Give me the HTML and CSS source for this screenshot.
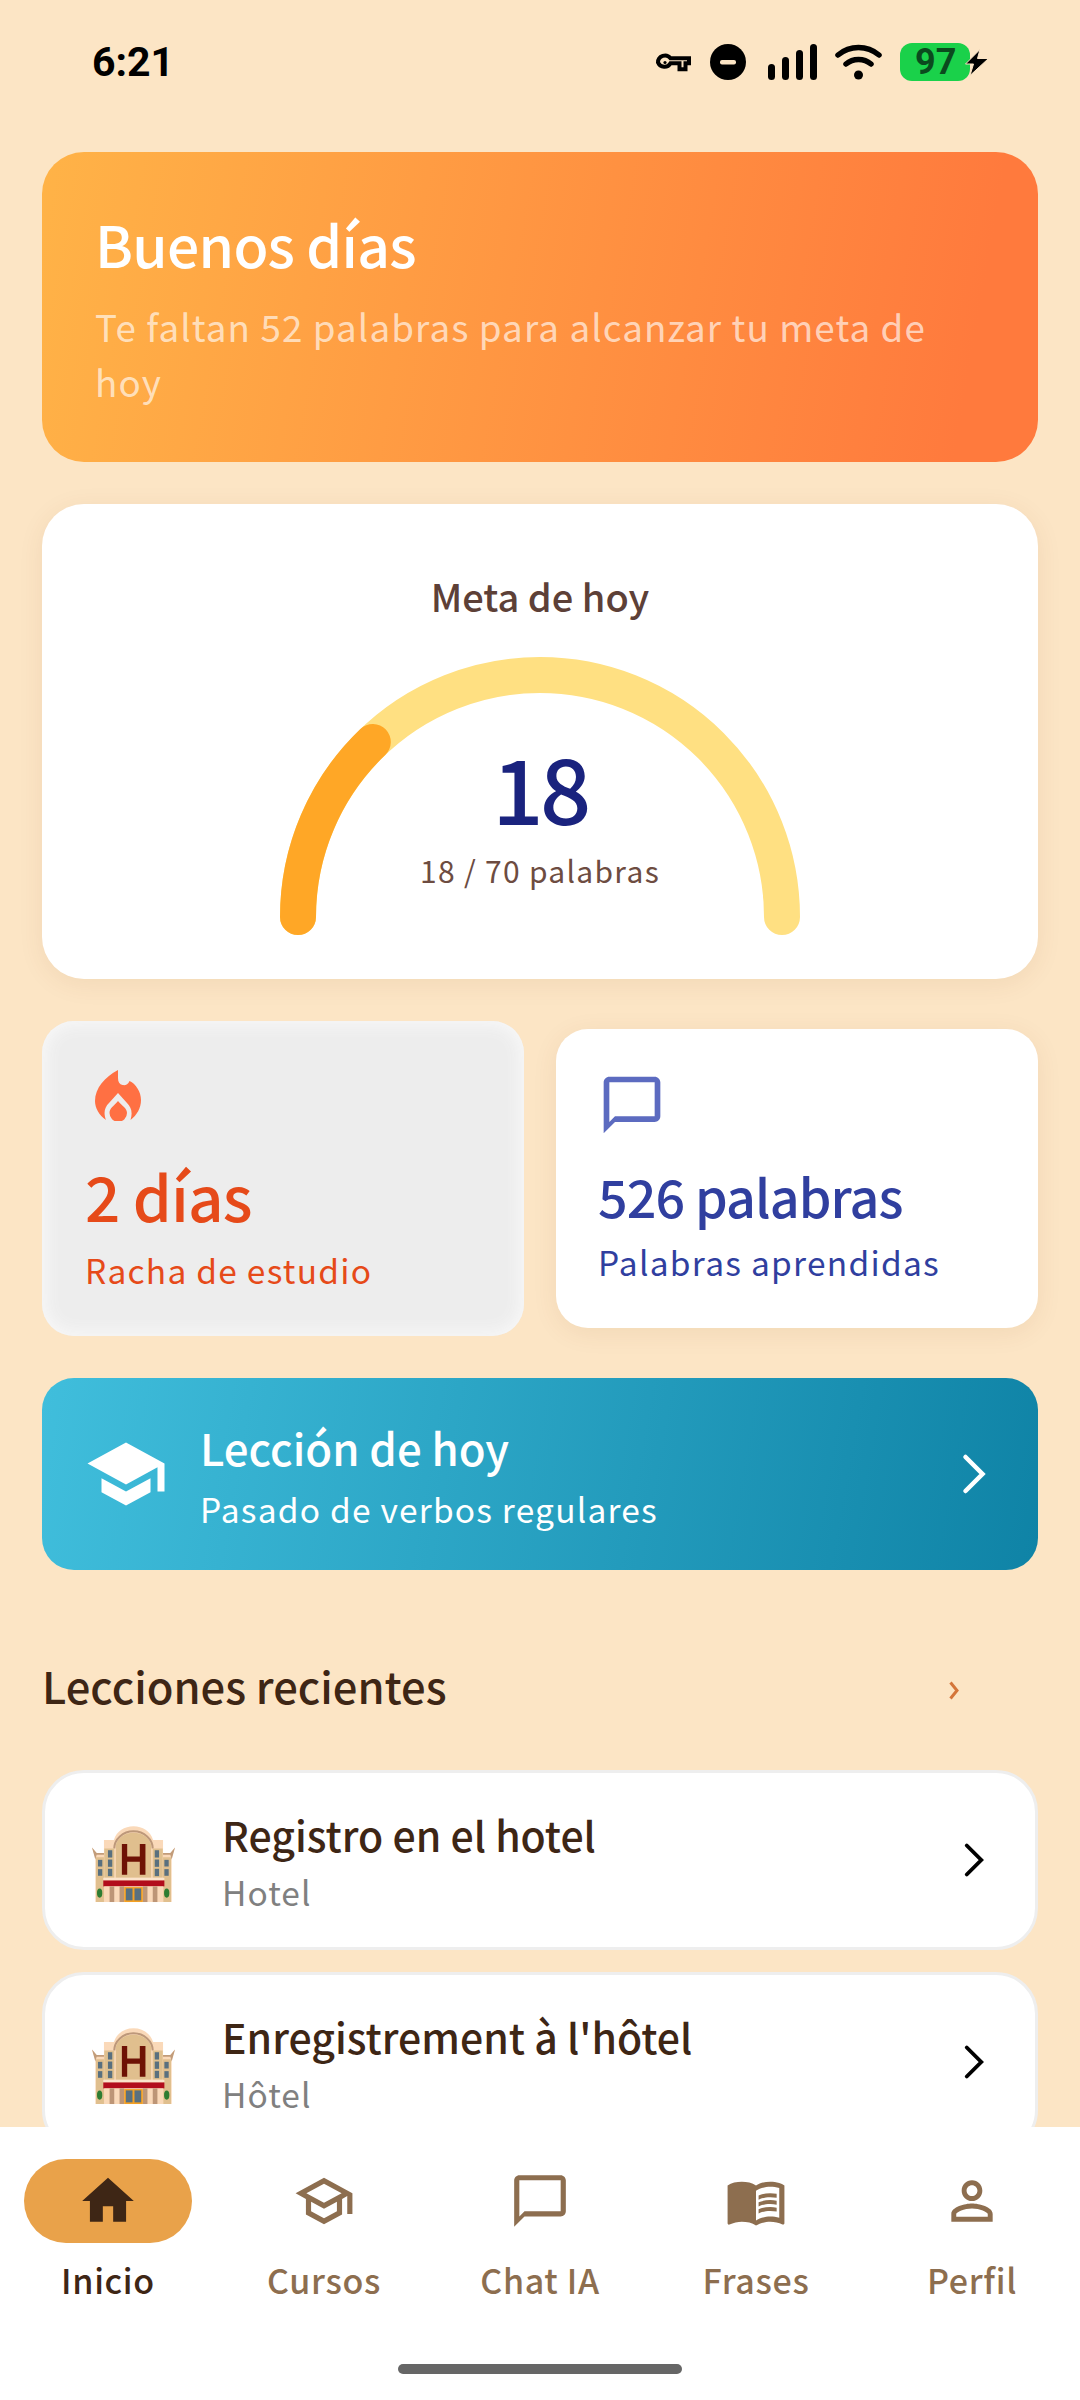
FILE: index.html
```html
<!DOCTYPE html>
<html lang="es">
<head>
<meta charset="utf-8">
<title>Inicio</title>
<link rel="stylesheet" href="styles.css">
</head>
<body>
<svg class="defs" width="0" height="0" aria-hidden="true">
  <symbol id="hotel" viewBox="185 195 250 233">
    <path fill="#FAD9B9" d="M185 259l14 16h22v-39h30c8-26 32-41 59-41s51 15 59 41h30v39h22l14-16-10 30v134H195V289z"/>
    <path fill="#C29C7A" d="M185 259l14 16h22v6h-22l-4 14zM435 259l-14 16h-22v6h22l4 14z"/>
    <path fill="#E0BF8E" d="M197 288h24v135h-24zM399 288h24v135h-24z"/>
    <path fill="#E0BF8E" d="M257 350v-100c6-22 29-36 53-36s47 14 53 36v100z"/>
    <path fill="none" stroke="#BD987A" stroke-width="6" d="M252 262c0-28 26-52 58-52s58 24 58 52"/>
    <path fill="#DFC08F" d="M222 262h30v88h-30zM368 262h30v88h-30z"/>
    <path fill="#6E1205" d="M275 248h16v38h38v-38h17v93h-17v-39h-38v39h-16z"/>
    <g fill="#59707F">
      <rect x="233" y="267" width="13" height="22"/><rect x="233" y="295" width="13" height="22"/><rect x="233" y="323" width="13" height="22"/>
      <rect x="374" y="267" width="13" height="22"/><rect x="374" y="295" width="13" height="22"/><rect x="374" y="323" width="13" height="22"/>
      <rect x="203" y="296" width="13" height="20"/><rect x="203" y="324" width="13" height="20"/>
      <rect x="403" y="296" width="13" height="20"/><rect x="403" y="324" width="13" height="20"/>
    </g>
    <rect x="219" y="350" width="184" height="8" fill="#FBE3CB"/>
    <rect x="219" y="358" width="184" height="18" fill="#B20D1C"/>
    <rect x="222" y="376" width="178" height="47" fill="#FAD9B9"/>
    <g fill="#BD9576"><rect x="238" y="376" width="14" height="47"/><rect x="268" y="376" width="14" height="47"/><rect x="338" y="376" width="14" height="47"/><rect x="368" y="376" width="14" height="47"/></g>
    <rect x="282" y="378" width="56" height="45" fill="#F4A023"/>
    <rect x="287" y="382" width="20" height="36" fill="#59707F"/><rect x="313" y="382" width="20" height="36" fill="#59707F"/>
    <ellipse cx="208" cy="396" rx="8" ry="14" fill="#2E7D32"/><ellipse cx="410" cy="396" rx="8" ry="14" fill="#2E7D32"/>
  </symbol>
  <symbol id="chev" viewBox="0 0 24 24"><path fill="none" stroke="currentColor" stroke-width="1.600" stroke-linecap="round" stroke-linejoin="miter" d="M9 6l6 6-6 6"/></symbol>
</svg>

<div class="app">
  <main class="scroll">
    <div class="status">
      <span class="clock">6:21</span>
      <div class="status-icons">
        <svg class="i-key" viewBox="0 0 35 19"><path fill="none" stroke="#000" stroke-width="4" d="M2 9.500a7 7 0 0 1 12.500-4.300H33v5h-3.500v6h-6v-6h-9A7 7 0 0 1 2 9.500z"/><circle cx="9" cy="9.500" r="1.600" fill="#000"/></svg>
        <svg class="i-dnd" viewBox="0 0 36 36"><circle cx="18" cy="18" r="18" fill="#000"/><rect x="10" y="16" width="16" height="4.500" rx="2" fill="#FDE6C6"/></svg>
        <svg class="i-sig" viewBox="0 0 49 36"><rect x="0" y="20" width="7" height="16" rx="3.500"/><rect x="14" y="13" width="7" height="23" rx="3.500"/><rect x="28" y="6" width="7" height="30" rx="3.500"/><rect x="42" y="0" width="7" height="36" rx="3.500"/></svg>
        <svg class="i-wifi" viewBox="0 0 47 36"><path fill="none" stroke="#000" stroke-width="5.500" stroke-linecap="round" d="M3 11c12-10 29-10 41 0M11 20c7-6 18-6 25 0"/><circle cx="23.500" cy="31" r="4.500"/></svg>
        <div class="battery"><span class="batt-pct">97</span></div>
        <svg class="i-bolt" viewBox="0 0 24 27"><path fill="#000" stroke="#FDE6C6" stroke-width="1" d="M15 .5L.5 15h8l-3.500 11.500L23.500 9.500H12.500L15 .5z"/></svg>
      </div>
    </div>

    <section class="hero">
      <h1 class="hero-title">Buenos días</h1>
      <p class="hero-sub">Te faltan 52 palabras para alcanzar tu meta de hoy</p>
    </section>

    <section class="goal">
      <h2 class="goal-title">Meta de hoy</h2>
      <div class="gauge">
        <svg class="gauge-arc" viewBox="0 0 520 278">
          <path class="track" d="M18 260A242 242 0 0 1 502 260"/>
          <path class="fill" d="M18 260A242 242 0 0 1 92.800 85"/>
        </svg>
        <div class="gauge-text">
          <span class="gauge-num">18</span>
          <span class="gauge-sub">18 / 70 palabras</span>
        </div>
      </div>
    </section>

    <section class="stats">
      <article class="stat stat-streak">
        <svg class="stat-flame" viewBox="0 0 46 51"><path fill="#FF7043" d="M23 0C10 7 0 18 0 31c0 7 4 14 11 19-3-8-1-13 3-17l9-10 9 10c4 4 6 9 3.500 17C42 45 46 38 46 30c0-8-5-16-11.500-19-1.500 4-4.500 4.500-7 4-3-.5-4.500-3-4.500-7zM23 31c-4 5-8.500 7-8.500 12a8.700 8.700 0 0 0 17.500 0c0-5-5-7-9-12z"/></svg>
        <strong class="stat-num">2 días</strong>
        <span class="stat-label">Racha de estudio</span>
      </article>
      <article class="stat stat-words">
        <svg class="stat-chat" viewBox="0 0 24 24"><path d="M20 2H4c-1.100 0-2 .9-2 2v18l4-4h14c1.100 0 2-.9 2-2V4c0-1.100-.9-2-2-2zm0 14H6l-2 2V4h16v12z"/></svg>
        <strong class="stat-num">526 palabras</strong>
        <span class="stat-label">Palabras aprendidas</span>
      </article>
    </section>

    <section class="lesson">
      <svg class="lesson-icon" viewBox="0 0 24 24"><path d="M5 13.180v4L12 21l7-3.820v-4L12 17l-7-3.820zM12 3L1 9l11 6 9-4.910V17h2V9L12 3z"/></svg>
      <div class="lesson-text">
        <span class="lesson-title">Lección de hoy</span>
        <span class="lesson-sub">Pasado de verbos regulares</span>
      </div>
      <svg class="lesson-chev"><use href="#chev"/></svg>
    </section>

    <div class="section-head">
      <h2 class="section-title">Lecciones recientes</h2>
      <svg class="section-more" viewBox="0 0 10 19"><path fill="none" stroke="currentColor" stroke-width="3" d="M1.500 1.500l6.500 8-6.500 8"/></svg>
    </div>

    <ul class="list">
      <li class="row">
        <svg class="row-emoji"><use href="#hotel"/></svg>
        <div class="row-text"><span class="row-title">Registro en el hotel</span><span class="row-sub">Hotel</span></div>
        <svg class="row-chev"><use href="#chev"/></svg>
      </li>
      <li class="row">
        <svg class="row-emoji"><use href="#hotel"/></svg>
        <div class="row-text"><span class="row-title">Enregistrement à l'hôtel</span><span class="row-sub">Hôtel</span></div>
        <svg class="row-chev"><use href="#chev"/></svg>
      </li>
    </ul>
  </main>

  <nav class="nav">
    <a class="tab tab-active">
      <span class="tab-pill"><svg class="tab-icon" viewBox="0 0 24 24"><path d="M10 20v-6h4v6h5v-8h3L12 3 2 12h3v8z"/></svg></span>
      <span class="tab-label">Inicio</span>
    </a>
    <a class="tab">
      <span class="tab-pill"><svg class="tab-icon" viewBox="0 0 24 24"><path d="M12 3L1 9l4 2.180v6L12 21l7-3.820v-6l2-1.090V17h2V9L12 3zm6.820 6L12 12.720 5.180 9 12 5.280 18.820 9zM17 15.990l-5 2.730-5-2.730v-3.720L12 15l5-2.730v3.720z"/></svg></span>
      <span class="tab-label">Cursos</span>
    </a>
    <a class="tab">
      <span class="tab-pill"><svg class="tab-icon" viewBox="0 0 24 24"><path d="M20 2H4c-1.100 0-2 .9-2 2v18l4-4h14c1.100 0 2-.9 2-2V4c0-1.100-.9-2-2-2zm0 14H6l-2 2V4h16v12z"/></svg></span>
      <span class="tab-label">Chat IA</span>
    </a>
    <a class="tab">
      <span class="tab-pill"><svg class="tab-icon" viewBox="0 0 24 24"><path d="M21 5c-1.110-.35-2.330-.5-3.500-.5-1.950 0-4.050.4-5.500 1.500-1.450-1.100-3.550-1.500-5.500-1.500S2.450 4.900 1 6v14.650c0 .25.25.5.5.5.1 0 .15-.05.25-.05C3.100 20.450 5.050 20 6.500 20c1.950 0 4.050.4 5.500 1.500 1.350-.85 3.800-1.500 5.500-1.500 1.650 0 3.350.3 4.750 1.050.1.05.15.05.25.05.25 0 .5-.25.5-.5V6c-.6-.45-1.250-.75-2-1zm0 13.500c-1.100-.35-2.300-.5-3.500-.5-1.700 0-4.150.65-5.500 1.500V8c1.350-.85 3.800-1.500 5.500-1.500 1.200 0 2.400.15 3.500.5v11.500z"/><path d="M17.500 10.500c.88 0 1.730.09 2.500.26V9.240c-.79-.15-1.640-.24-2.500-.24-1.700 0-3.240.29-4.500.83v1.660c1.130-.64 2.700-.99 4.500-.99zM13 12.490v1.660c1.130-.64 2.700-.99 4.500-.99.88 0 1.730.09 2.500.26V11.900c-.79-.15-1.640-.24-2.500-.24-1.700 0-3.240.3-4.500.83zM17.500 14.330c-1.700 0-3.240.29-4.500.83v1.660c1.130-.64 2.700-.99 4.500-.99.88 0 1.730.09 2.500.26v-1.520c-.79-.16-1.640-.24-2.500-.24z"/></svg></span>
      <span class="tab-label">Frases</span>
    </a>
    <a class="tab">
      <span class="tab-pill"><svg class="tab-icon" viewBox="0 0 24 24"><path d="M12 5.900c1.160 0 2.100.94 2.100 2.100s-.94 2.100-2.100 2.100S9.900 9.160 9.900 8s.94-2.100 2.100-2.100m0 9c2.970 0 6.100 1.460 6.100 2.100v1.100H5.900V17c0-.64 3.130-2.100 6.100-2.100M12 4C9.790 4 8 5.790 8 8s1.790 4 4 4 4-1.790 4-4-1.790-4-4-4zm0 9c-2.670 0-8 1.340-8 4v3h16v-3c0-2.660-5.330-4-8-4z"/></svg></span>
      <span class="tab-label">Perfil</span>
    </a>
    <div class="home-bar"></div>
  </nav>
</div>
</body>
</html>
```

FILE: styles.css
```css
* { box-sizing: border-box; }
html, body { margin: 0; padding: 0; }
body {
  width: 1080px;
  height: 2400px;
  overflow: hidden;
  background: #FCE5C5;
  font-family: "Noto Sans CJK SC", "Noto Sans", sans-serif;
}
h1, h2, p, ul { margin: 0; padding: 0; }
.defs { position: absolute; }

.app { display: flex; flex-direction: column; height: 2400px; }
.scroll { flex: 1; min-height: 0; overflow: hidden; padding: 0 42px; background: #FCE5C5; }

/* status bar */
.status { display: flex; align-items: center; justify-content: space-between; height: 152px; padding: 0 91px 28px 92px; margin: 0 -42px; }
.clock { font-family: Roboto, sans-serif; font-weight: 700; font-size: 41px; color: #000; }
.status-icons { display: flex; align-items: center; }
.i-key { width: 35px; height: 19px; margin-right: 19px; }
.i-dnd { width: 36px; height: 36px; margin-right: 22px; }
.i-sig { width: 49px; height: 36px; margin-right: 18px; }
.i-wifi { width: 47px; height: 36px; margin-right: 18px; }
.battery { width: 70px; height: 38px; border-radius: 12px; background: #1AD14A; display: flex; align-items: center; padding-left: 15px; }
.batt-pct { font-family: Roboto, sans-serif; font-weight: 700; font-size: 36px; color: #0B4A1E; line-height: 38px; }
.i-bolt { width: 24px; height: 27px; margin-left: -5px; }

/* hero */
.hero { height: 310px; border-radius: 42px; padding: 53px 53px 0; background: linear-gradient(100deg, #FFB347 0%, #FF7A3D 92%); }
.hero-title { font-size: 57px; font-weight: 500; line-height: 76px; letter-spacing: -.7px; color: #fff; }
.hero-sub { margin-top: 18px; font-size: 36.750px; line-height: 55px; letter-spacing: 1.100px; color: rgba(255,255,255,.65); }

/* goal */
.goal { margin-top: 42px; height: 475px; border-radius: 42px; background: #fff; box-shadow: 0 5px 26px rgba(120,70,0,.08); padding-top: 67px; text-align: center; }
.goal-title { font-size: 38px; font-weight: 500; line-height: 50px; color: #5D4037; }
.gauge { position: relative; width: 520px; height: 278px; margin: 36px auto 0; }
.gauge-arc { display: block; width: 520px; height: 278px; }
.track, .fill { fill: none; stroke-width: 36; stroke-linecap: round; }
.track { stroke: #FFE082; }
.fill { stroke: #FFA726; }
.gauge-text { position: absolute; left: 0; right: 0; top: 74px; display: flex; flex-direction: column; align-items: center; }
.gauge-num { font-size: 90px; font-weight: 500; line-height: 110px; letter-spacing: -3.500px; color: #1A237E; }
.gauge-sub { margin-top: 6px; font-size: 30px; line-height: 46px; letter-spacing: 1.300px; color: #6D4C41; }

/* stats */
.stats { margin-top: 42px; display: grid; grid-template-columns: 482px 482px; column-gap: 32px; align-items: center; }
.stat { display: flex; flex-direction: column; border-radius: 32px; }
.stat-streak { height: 315px; background: #EDEDED; box-shadow: inset 0 0 16px 4px #F8F8F8; padding: 49px 43px 0; color: #E64A19; }
.stat-words { height: 299px; background: #fff; box-shadow: 0 5px 26px rgba(120,70,0,.08); padding: 42px 42px 0; color: #303F9F; }
.stat-flame { width: 46px; height: 51px; margin-left: 10px; }
.stat-chat { width: 68px; height: 68px; fill: #5C6BC0; }
.stat-num { font-size: 62px; font-weight: 500; line-height: 84px; letter-spacing: -.8px; margin-top: 32px; }
.stat-words .stat-num { font-size: 52px; font-weight: 500; line-height: 72px; letter-spacing: -.9px; margin-top: 21px; }
.stat-label { margin-top: 8px; font-size: 33.500px; line-height: 50px; letter-spacing: 1.250px; }
.stat-words .stat-label { margin-top: 5px; }

/* lesson */
.lesson { margin-top: 42px; height: 192px; border-radius: 32px; background: linear-gradient(100deg, #40BEDC 0%, #0F83A6 100%); display: flex; align-items: center; padding: 0 30px 0 42px; color: #fff; }
.lesson-icon { width: 84px; height: 84px; fill: #fff; flex: none; }
.lesson-text { flex: 1; display: flex; flex-direction: column; margin-left: 32px; }
.lesson-title { font-size: 43.750px; font-weight: 500; line-height: 62px; margin-top: 1px; }
.lesson-sub { margin-top: 6px; font-size: 33.500px; line-height: 50px; letter-spacing: 1.200px; }
.lesson-chev { width: 68px; height: 68px; color: #fff; flex: none; }

/* section head */
.section-head { display: flex; align-items: center; justify-content: space-between; height: 200px; padding-top: 32px; }
.section-title { font-size: 43.500px; font-weight: 500; line-height: 62px; color: #3E2615; }
.section-more { width: 10px; height: 19px; color: #D4753A; margin: 8px 79px 0 0; }

/* list */
.list { list-style: none; display: flex; flex-direction: column; row-gap: 22px; }
.row { height: 180px; flex: none; border-radius: 42px; background: #fff; border: 3px solid #EEEEEE; display: flex; align-items: center; padding: 0 32px 0 47px; }
.row-emoji { width: 83px; height: 78px; flex: none; margin-top: 9px; }
.row-text { flex: 1; display: flex; flex-direction: column; margin-left: 47px; }
.row-title { font-size: 41px; font-weight: 500; line-height: 58px; color: #3E2615; margin-top: 2px; }
.row-sub { margin-top: 4px; font-size: 33.500px; line-height: 50px; letter-spacing: 1.050px; color: #808080; }
.row-chev { width: 58px; height: 58px; color: #000; flex: none; }

/* nav */
.nav { flex: none; height: 273px; background: #fff; position: relative; display: grid; grid-template-columns: repeat(5, 216px); padding-top: 32px; align-items: start; }
.tab { display: flex; flex-direction: column; align-items: center; color: #8D6E4F; }
.tab-pill { width: 168px; height: 84px; border-radius: 42px; display: flex; align-items: center; justify-content: center; }
.tab-active { color: #3E2615; }
.tab-active .tab-pill { background: #E9A24A; }
.tab-icon { width: 62px; height: 62px; fill: currentColor; }
.tab-label { margin-top: 12px; font-size: 34px; font-weight: 500; line-height: 50px; letter-spacing: .66px; }
.home-bar { position: absolute; left: 398px; top: 237px; width: 284px; height: 10px; border-radius: 5px; background: #666; }
```
